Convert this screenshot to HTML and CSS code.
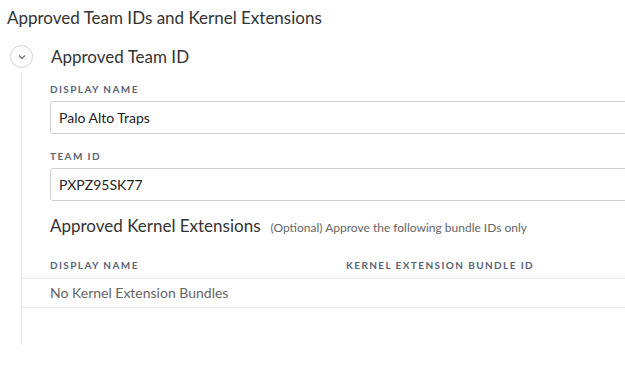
FILE: index.html
```html
<!DOCTYPE html>
<html lang="en">
<head>
  <meta charset="UTF-8">
  <title>Approved Team IDs and Kernel Extensions</title>
  <link rel="stylesheet" href="styles.css">
</head>
<body>

  <h1 class="page-title">Approved Team IDs and Kernel Extensions</h1>

  <div class="team-block">
    <div class="team-head">
      <span class="toggle">
        <svg width="8" height="6" viewBox="0 0 8 6"><path d="M1 1.5 L4 4.5 L7 1.5" fill="none" stroke="#666" stroke-width="1.1"/></svg>
      </span>
      <h2>Approved Team ID</h2>
    </div>

    <div class="team-body">
      <div class="field">
        <label>Display Name</label>
        <div class="input">Palo Alto Traps</div>
      </div>
      <div class="field">
        <label>Team ID</label>
        <div class="input">PXPZ95SK77</div>
      </div>

      <div class="kext-title">
        <h3>Approved Kernel Extensions</h3>
        <span class="hint">(Optional) Approve the following bundle IDs only</span>
      </div>

      <div class="table">
        <div class="row head">
          <span>Display Name</span>
          <span>Kernel Extension Bundle ID</span>
        </div>
        <div class="row empty">No Kernel Extension Bundles</div>
      </div>
    </div>
  </div>

</body>
</html>
```

FILE: styles.css
```css
* {
  margin: 0;
  padding: 0;
  box-sizing: border-box;
}

html {
  overflow: hidden;
}

body {
  font-family: 'Lato', sans-serif;
  color: #333;
  background: #fff;
  width: 625px;
  overflow: hidden;
}

.page-title {
  font-size: 17px;
  font-weight: normal;
  padding: 7px 0 0 7px;
  line-height: 21px;
}

.team-block {
  margin-top: 17px;
}

.team-head {
  display: flex;
  align-items: center;
  padding-left: 10px;
}

.toggle {
  width: 23px;
  height: 23px;
  border: 1px solid #d4d4d4;
  border-radius: 50%;
  display: flex;
  align-items: center;
  justify-content: center;
}

.team-head h2 {
  font-size: 17px;
  font-weight: normal;
  margin-left: 18px;
}

.team-body {
  margin-left: 21px;
  margin-top: 5px;
  border-left: 1px solid #e6e6e6;
  padding-bottom: 37px;
  width: 700px;
}

.field {
  padding: 10px 0 0 28px;
}

.field + .field {
  padding-top: 16px;
}

label {
  display: block;
  font-size: 10px;
  font-weight: bold;
  letter-spacing: 1.4px;
  text-transform: uppercase;
  color: #5b6473;
  line-height: 12px;
  margin-bottom: 6px;
}

.input {
  height: 33px;
  border: 1px solid #cfcfcf;
  border-radius: 3px;
  padding: 0 8px;
  font-size: 14px;
  line-height: 31px;
  color: #222;
}

.kext-title {
  padding: 14px 0 0 28px;
  display: flex;
  align-items: baseline;
}

.kext-title h3 {
  font-size: 17px;
  font-weight: normal;
}

.hint {
  font-size: 12px;
  color: #666;
  margin-left: 10px;
}

.table {
  margin-top: 23px;
}

.row {
  padding-left: 28px;
  border-bottom: 1px solid #e8e8e8;
}

.row.head {
  display: grid;
  grid-template-columns: 296px 1fr;
  font-size: 10px;
  font-weight: bold;
  letter-spacing: 1.4px;
  text-transform: uppercase;
  color: #5b6473;
  line-height: 12px;
  height: 20px;
}

.row.empty {
  font-size: 14px;
  color: #666;
  height: 29px;
  line-height: 27px;
}
```
